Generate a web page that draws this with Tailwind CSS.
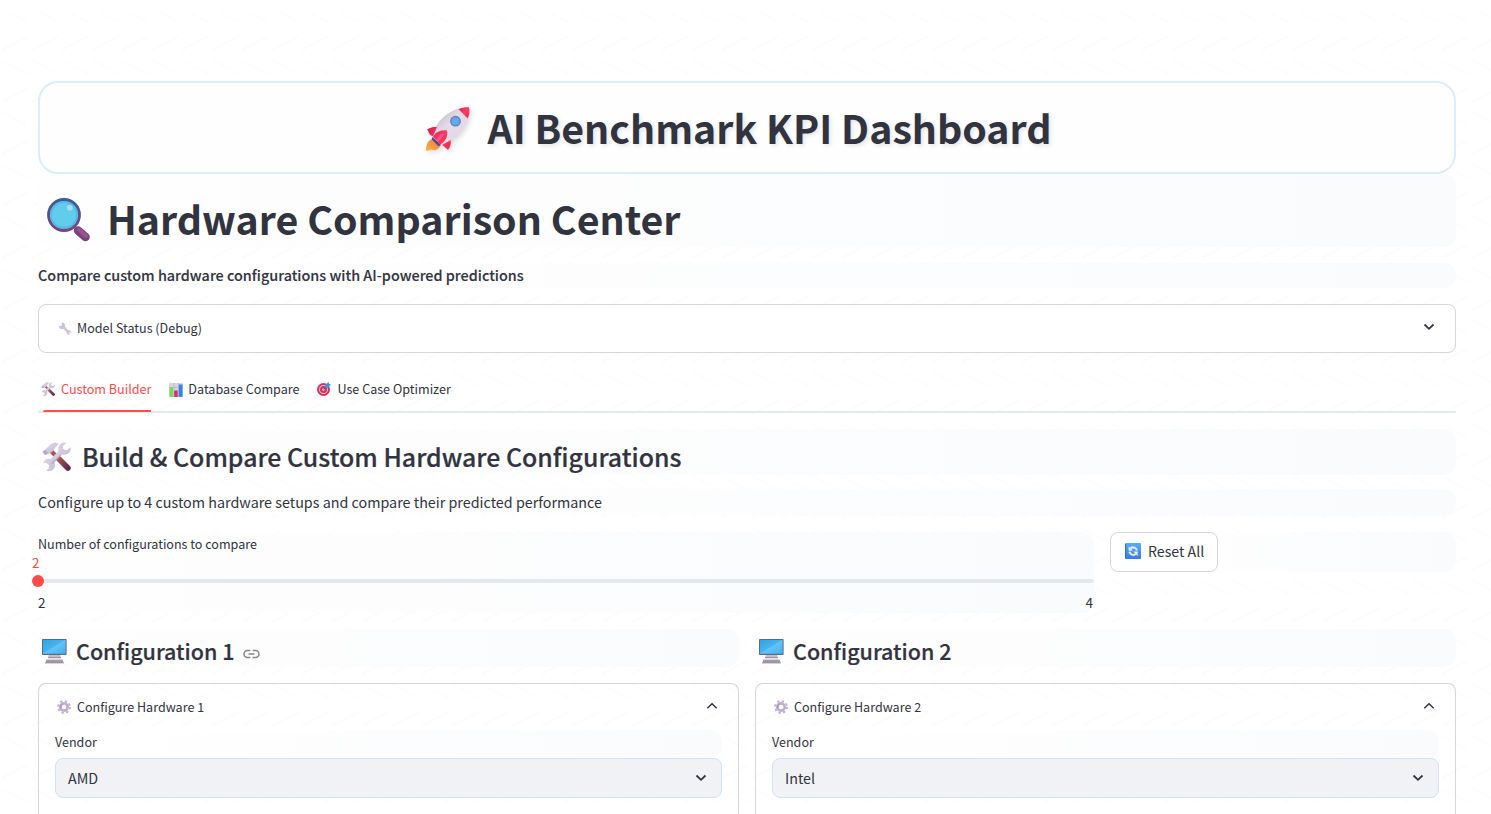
<!DOCTYPE html>
<html lang="en">
<head>
<meta charset="utf-8">
<title>AI Benchmark KPI Dashboard</title>
<script src="https://cdn.jsdelivr.net/npm/@tailwindcss/browser@4"></script>
</head>
<body class="h-[814px] overflow-hidden bg-white font-['Noto_Sans_CJK_SC',sans-serif] text-[#31333f]">
<!-- shared icon definitions -->
<svg class="absolute h-0 w-0" aria-hidden="true">
  <defs>
    <linearGradient id="body" x1="0" y1="0" x2="1" y2="1"><stop offset="0" stop-color="#b9adb9"/><stop offset=".45" stop-color="#e6dbe8"/><stop offset="1" stop-color="#ddd5ea"/></linearGradient>
    <linearGradient id="red" x1="0" y1="0" x2="1" y2="1"><stop offset="0" stop-color="#d3214b"/><stop offset=".5" stop-color="#fb3d68"/><stop offset="1" stop-color="#f0264f"/></linearGradient>
    <linearGradient id="flame" x1="0" y1="1" x2="1" y2="0"><stop offset="0" stop-color="#ffb04a"/><stop offset="1" stop-color="#f07a35"/></linearGradient>
    <linearGradient id="rim" x1="0" y1="0" x2="0" y2="1"><stop offset="0" stop-color="#3f5a94"/><stop offset="1" stop-color="#7a4380"/></linearGradient>
    <linearGradient id="screen" x1="0" y1="0" x2="1" y2="1"><stop offset="0" stop-color="#2fa4e6"/><stop offset=".48" stop-color="#45b4f0"/><stop offset=".5" stop-color="#68c2f6"/><stop offset="1" stop-color="#3fb0f4"/></linearGradient>
    <linearGradient id="handle" x1="0" y1="0" x2="1" y2="1"><stop offset="0" stop-color="#a0584f"/><stop offset="1" stop-color="#65284f"/></linearGradient>
    <linearGradient id="steel" x1="0" y1="0" x2="1" y2="1"><stop offset="0" stop-color="#e4e0ee"/><stop offset="1" stop-color="#bdb2cc"/></linearGradient>
    <linearGradient id="blue" x1="0" y1="0" x2="0" y2="1"><stop offset="0" stop-color="#55aefa"/><stop offset="1" stop-color="#3b7be6"/></linearGradient>
    <symbol id="i-rocket" viewBox="0 0 44 44">
      <path d="M8 32C3 32 0 36 0 43.500c2 .6 4-.2 5.500-1 2 1 4 1 6-.5 3-2 3-4 3-6z" fill="url(#flame)"/>
      <path d="M6.500 30 15 38l-2.500 1.200-7-7z" fill="#4b4b92"/>
      <path d="M7 29C8 18 17 7 32.500 1.500l10 9.500C38 25 27 36 15 37z" fill="url(#body)"/>
      <path d="M32.500 2C36 .5 40-.1 43 .2c1 3.500.3 7.500-1.200 11.300C39 9 36 6 32.500 2z" fill="url(#red)"/>
      <circle cx="29.500" cy="14.200" r="5.400" fill="#6c7c9e"/><circle cx="29.500" cy="14.200" r="4" fill="#58acf8"/>
      <path d="M1 22.500C5 20 8 19.700 11 20L7 29.500C2.500 28 3 24.500 1 22.500zM24.700 33c.6 4-.7 7.500-2.700 10-1.500-2-3.500-3-6-5z" fill="url(#red)"/>
      <path d="M7 30c2-4 7-7.500 14-6.500 1.500 6-2 11-6.500 14C12 35 9.500 32.500 7 30z" fill="url(#red)"/>
      <path d="M17 27 11 34" stroke="#ff6592" stroke-width="2.500" opacity=".6"/>
    </symbol>
    <symbol id="i-search" viewBox="0 0 44 44">
      <path d="m31 32.500 7.500 6.500" stroke="#7b427b" stroke-width="8.500" stroke-linecap="round"/>
      <path d="m32 31.500 7 6.500" stroke="#985394" stroke-width="4" stroke-linecap="round"/>
      <circle cx="17" cy="17" r="15.500" fill="#62cdea" stroke="url(#rim)" stroke-width="2.800"/>
      <circle cx="17" cy="17" r="13" fill="none" stroke="#49abe0" stroke-width="2" opacity=".55"/>
      <circle cx="22.800" cy="9.800" r="2.800" fill="#a8dcf6"/>
    </symbol>
    <symbol id="i-tools" viewBox="0 0 28 28">
      <path d="m8 8 8 8" stroke="#a0584f" stroke-width="4"/><path d="m16 16 9 9" stroke="url(#handle)" stroke-width="5.500" stroke-linecap="round"/>
      <path d="M.5 9.500 3 12.500 7 11l3-1.500 2-3c1-2 3-3 4-4.500C13-.5 9 .5 6.500 4z" fill="url(#steel)"/>
      <path d="m.5 9.500 2.500 3L6 11 3.500 7.500z" fill="#b3a9c4"/>
      <path d="m7 21 14-14" stroke="#d5cee2" stroke-width="4.500"/>
      <path d="M23.500.7a6 6 0 1 0 4 4.300l-3.500 3-3.500-.8-.5-3.200zM4 27.500a6 6 0 1 0-3-7.500l3.500.2 2.500 2.300-.5 3z" fill="url(#steel)"/>
      <path d="m18.500 12-9 9" stroke="#b6a8c7" stroke-width="1.200"/>
    </symbol>
    <symbol id="i-wrench" viewBox="0 0 14 14">
      <path d="m4 4 6.500 6" stroke="#cfc7dc" stroke-width="2.600"/>
      <path d="M3.500.5a3.200 3.200 0 1 1-2.800 3.200l2 .6 1.400-1.200zM9.500 8.700a2.600 2.600 0 0 1 4 1.700l-1.700-.2-.7.700.8 2A2.600 2.600 0 0 1 8.700 10z" fill="#cbc2da"/>
    </symbol>
    <symbol id="i-chart" viewBox="0 0 14 14">
      <rect width="14" height="14" rx=".7" fill="#d9d2e4"/><path d="M0 4.500h14M5 0v14M9.500 0v14" stroke="#b7adc7" stroke-width=".6"/>
      <path d="M.6 4h3.500v10H.6z" fill="#72dc5c"/><path d="M5.200 7.500h3.500V14H5.200z" fill="#d72f62"/><path d="M9.800 1.500h3.700V14H9.800z" fill="#3187d9"/>
    </symbol>
    <symbol id="i-target" viewBox="0 0 14 14">
      <circle cx="6.500" cy="7.500" r="6.500" fill="#d72e5c"/><circle cx="6.500" cy="7.500" r="4.500" fill="#f3c4d6"/><circle cx="6.500" cy="7.500" r="3.500" fill="#d72e5c"/><circle cx="6.500" cy="7.500" r="1.300" fill="#f3dce8"/>
      <path d="m6.500 7.500 4-4" stroke="#2970ac" stroke-width="1.200"/><path d="M8.500 5.700 8.500 2.800 11.500 0l.6 2 1.900.5-2.700 2.900z" fill="#2f9be8"/>
    </symbol>
    <symbol id="i-monitor" viewBox="0 0 25 25">
      <path d="M7 15h11l.8 4H6z" fill="#c5bfcc"/><path d="M6 18.200h13v1H6z" fill="#8e8697"/>
      <path d="M4.500 20.500h16l1.500 4H3z" fill="#b3a8b8"/><path d="M4 22h17M3.500 23.400h18" stroke="#81778a" stroke-width=".7" stroke-dasharray="1.400 .5"/>
      <rect width="24.600" height="16" rx=".7" fill="#5c6b80"/><path d="M1 1h22.600v13.800H1z" fill="url(#screen)"/>
    </symbol>
    <symbol id="i-gear" viewBox="0 0 14 14">
      <circle cx="7" cy="7" r="5.900" fill="none" stroke="#c0b1d0" stroke-width="2" stroke-dasharray="2.300 2.334"/>
      <circle cx="7" cy="7" r="3.700" fill="none" stroke="#beafd0" stroke-width="2.700"/>
      <path d="M3.900 8.500a3.600 3.600 0 0 1 1.800-4.600" stroke="#9884ae" stroke-width=".9" fill="none"/>
    </symbol>
    <symbol id="i-refresh" viewBox="0 0 16 16">
      <rect width="16" height="16" rx=".8" fill="url(#blue)"/><path d="M0 1v14.500h1.200V1z" fill="#3a70c4"/>
      <path d="M5.600 5.200a4 4 0 0 1 6.300 2.300M10.800 11A4 4 0 0 1 4.400 8.800" fill="none" stroke="#e9f0fb" stroke-width="2"/>
      <path d="M3.600 3.400v4.300H8zM12.700 12.900V8.600H8.300z" fill="#e9f0fb"/>
    </symbol>
    <symbol id="i-down" viewBox="0 0 12 8"><path d="m1.500 1.500 4.500 4.300 4.500-4.300" fill="none" stroke="#31333f" stroke-width="1.800"/></symbol>
    <symbol id="i-up" viewBox="0 0 12 8"><path d="m1.300 6.300 4.700-4.600 4.700 4.600" fill="none" stroke="#31333f" stroke-width="1.500"/></symbol>
    <pattern id="mesh" width="30" height="52" patternUnits="userSpaceOnUse">
      <path d="M2 38 29 24" stroke="#fcfcfd" stroke-width="2"/><path d="M2 48 28 62M2-4 28 10" stroke="#fbfdff" stroke-width="2"/>
    </pattern>
  </defs>
</svg>

<div class="relative h-[814px] w-full overflow-hidden">
  <svg class="absolute inset-x-0 top-3 h-[802px] w-full" aria-hidden="true"><rect width="100%" height="100%" fill="url(#mesh)"/></svg>

  <main class="relative flex flex-col pr-[35px] pl-[38px] pt-[81px]">
    <header class="flex h-[93px] items-start justify-center rounded-[20px] border-2 border-[#dbecfe] bg-[#fefefe] pr-4">
      <svg class="mt-6 mr-[17px] h-11 w-11 drop-shadow-[2px_2px_2px_rgba(0,0,0,0.12)]"><use href="#i-rocket"/></svg>
      <h1 class="mt-4 text-[39.300px] leading-[56px] font-bold whitespace-nowrap [text-shadow:2px_2px_4px_rgba(0,0,0,0.1)]">AI Benchmark KPI Dashboard</h1>
    </header>

    <section class="flex h-[73px] items-start rounded-xl bg-linear-to-r from-[#fefefe] to-[#fafbfd] pl-[9px]">
      <svg class="mt-6 mr-4 h-11 w-11"><use href="#i-search"/></svg>
      <h2 class="mt-[17px] text-[39.330px] leading-[54px] font-bold whitespace-nowrap">Hardware Comparison Center</h2>
    </section>

    <p class="mt-4 h-[25px] rounded-xl bg-linear-to-r from-white to-[#fafbfd] text-[14.380px] leading-[23px] font-medium [-webkit-text-stroke:0.1px_#31333f]">Compare custom hardware configurations with AI-powered predictions</p>

    <div class="mt-4 flex h-[49px] items-center rounded-lg border border-[#d5d6da] bg-white/60 pr-5 pl-[19px]">
      <svg class="mr-[5px] h-[14px] w-[14px]"><use href="#i-wrench"/></svg>
      <span class="-mt-[2px] text-[12.550px] leading-5">Model Status (Debug)</span>
      <svg class="-mt-[3px] ml-auto h-2 w-3"><use href="#i-down"/></svg>
    </div>

    <nav class="relative mt-4 flex h-11 gap-[18px] border-b-2 border-[#e6e9ed] pl-[3px] text-[12.580px] leading-[40px]">
      <span class="flex items-start text-[#ff4b4b]"><svg class="mt-[13px] mr-[6px] h-[14px] w-[14px]"><use href="#i-tools"/></svg>Custom Builder</span>
      <span class="flex items-start"><svg class="mt-[14px] mr-[5px] h-[14px] w-[14px]"><use href="#i-chart"/></svg>Database Compare</span>
      <span class="flex items-start"><svg class="mt-[13px] mr-[6px] h-[14px] w-[14px]"><use href="#i-target"/></svg>Use Case Optimizer</span>
      <i class="absolute -bottom-px left-[5px] h-[2px] w-[108px] rounded-tl-[2px] bg-[#ff4b4b]"></i>
    </nav>

    <section class="mt-4 flex h-[46px] items-start rounded-xl bg-linear-to-r from-[#fefefe] to-[#fafbfd] pl-1">
      <svg class="mt-[13px] mr-[11px] h-[29px] w-[29px]"><use href="#i-tools"/></svg>
      <h3 class="mt-[9px] text-[24.880px] leading-9 font-medium whitespace-nowrap [-webkit-text-stroke:0.2px_#31333f]">Build &amp; Compare Custom Hardware Configurations</h3>
    </section>

    <p class="mt-[14px] h-[27px] rounded-xl bg-linear-to-r from-white to-[#fafbfd] text-[14.330px] leading-[25px]">Configure up to 4 custom hardware setups and compare their predicted performance</p>

    <div class="mt-4 flex items-start gap-4">
      <section class="relative h-[81px] w-[1056px] rounded-xl bg-linear-to-r from-[#fefefe] to-[#fafbfd]">
        <p class="text-[12.550px] leading-6">Number of configurations to compare</p>
        <span class="absolute top-[20px] -left-[6px] text-[13.500px] leading-5 text-[#ff4b4b]">2</span>
        <div class="mt-[23px] h-1 w-full rounded-r-sm bg-[#e3e7ef]"></div>
        <i class="absolute top-[43px] -left-[6px] h-3 w-3 rounded-full bg-[#ff4b4b]"></i>
        <div class="mt-[9px] flex justify-between pr-px text-[13.500px] leading-5"><span>2</span><span>4</span></div>
      </section>
      <section class="flex h-10 flex-1 rounded-xl bg-linear-to-r from-white to-[#fafbfd]">
        <button class="flex h-10 w-[108px] items-start rounded-lg border border-[#d5d6da] bg-white pl-[14px] text-[14.200px] leading-9 whitespace-nowrap"><svg class="mt-[10px] mr-[7px] h-4 w-4"><use href="#i-refresh"/></svg>Reset All</button>
      </section>
    </div>

    <div class="mt-4 grid grid-cols-2 gap-4">
      <section>
        <div class="flex h-[38px] items-start rounded-xl bg-linear-to-r from-[#fefefe] to-[#fafbfd] pl-1">
          <svg class="mt-[10px] mr-[9px] h-[25px] w-[25px]"><use href="#i-monitor"/></svg>
          <h4 class="mt-[7px] text-[21.500px] leading-[30px] font-medium [-webkit-text-stroke:0.2px_#31333f]">Configuration 1</h4>
          <svg class="mt-[20px] ml-[8px] h-[10px] w-[17px]" viewBox="0 0 17 10" fill="none" stroke="#85868d" stroke-width="1.500"><path d="M7.300 1.500H4.500a3.500 3.500 0 0 0 0 7h2.800M9.700 1.500h2.800a3.500 3.500 0 0 1 0 7H9.700M5.500 5h6"/></svg>
        </div>
        <div class="mt-4 h-[131px] rounded-t-lg border border-b-0 border-[#d5d6da] px-4">
          <div class="flex h-[46px] items-center pr-1 pl-[2px] text-[12.550px] leading-5"><svg class="mr-[6px] h-[14px] w-[14px]"><use href="#i-gear"/></svg>Configure Hardware 1<svg class="-mt-[3px] ml-auto h-2 w-3"><use href="#i-up"/></svg></div>
          <p class="h-7 rounded-xl bg-linear-to-r from-white to-[#fafbfd] text-[12.550px] leading-6">Vendor</p>
          <div class="flex h-10 items-center rounded-lg border border-[#cfe2f6] bg-[#f0f2f6] pr-[14px] pl-3 text-[14.300px] leading-6">AMD<svg class="ml-auto h-2 w-3"><use href="#i-down"/></svg></div>
        </div>
      </section>
      <section>
        <div class="flex h-[38px] items-start rounded-xl bg-linear-to-r from-[#fefefe] to-[#fafbfd] pl-1">
          <svg class="mt-[10px] mr-[9px] h-[25px] w-[25px]"><use href="#i-monitor"/></svg>
          <h4 class="mt-[7px] text-[21.500px] leading-[30px] font-medium [-webkit-text-stroke:0.2px_#31333f]">Configuration 2</h4>
        </div>
        <div class="mt-4 h-[131px] rounded-t-lg border border-b-0 border-[#d5d6da] px-4">
          <div class="flex h-[46px] items-center pr-1 pl-[2px] text-[12.550px] leading-5"><svg class="mr-[6px] h-[14px] w-[14px]"><use href="#i-gear"/></svg>Configure Hardware 2<svg class="-mt-[3px] ml-auto h-2 w-3"><use href="#i-up"/></svg></div>
          <p class="h-7 rounded-xl bg-linear-to-r from-white to-[#fafbfd] text-[12.550px] leading-6">Vendor</p>
          <div class="flex h-10 items-center rounded-lg border border-[#cfe2f6] bg-[#f0f2f6] pr-[14px] pl-3 text-[14.300px] leading-6">Intel<svg class="ml-auto h-2 w-3"><use href="#i-down"/></svg></div>
        </div>
      </section>
    </div>
  </main>
</div>
</body>
</html>
